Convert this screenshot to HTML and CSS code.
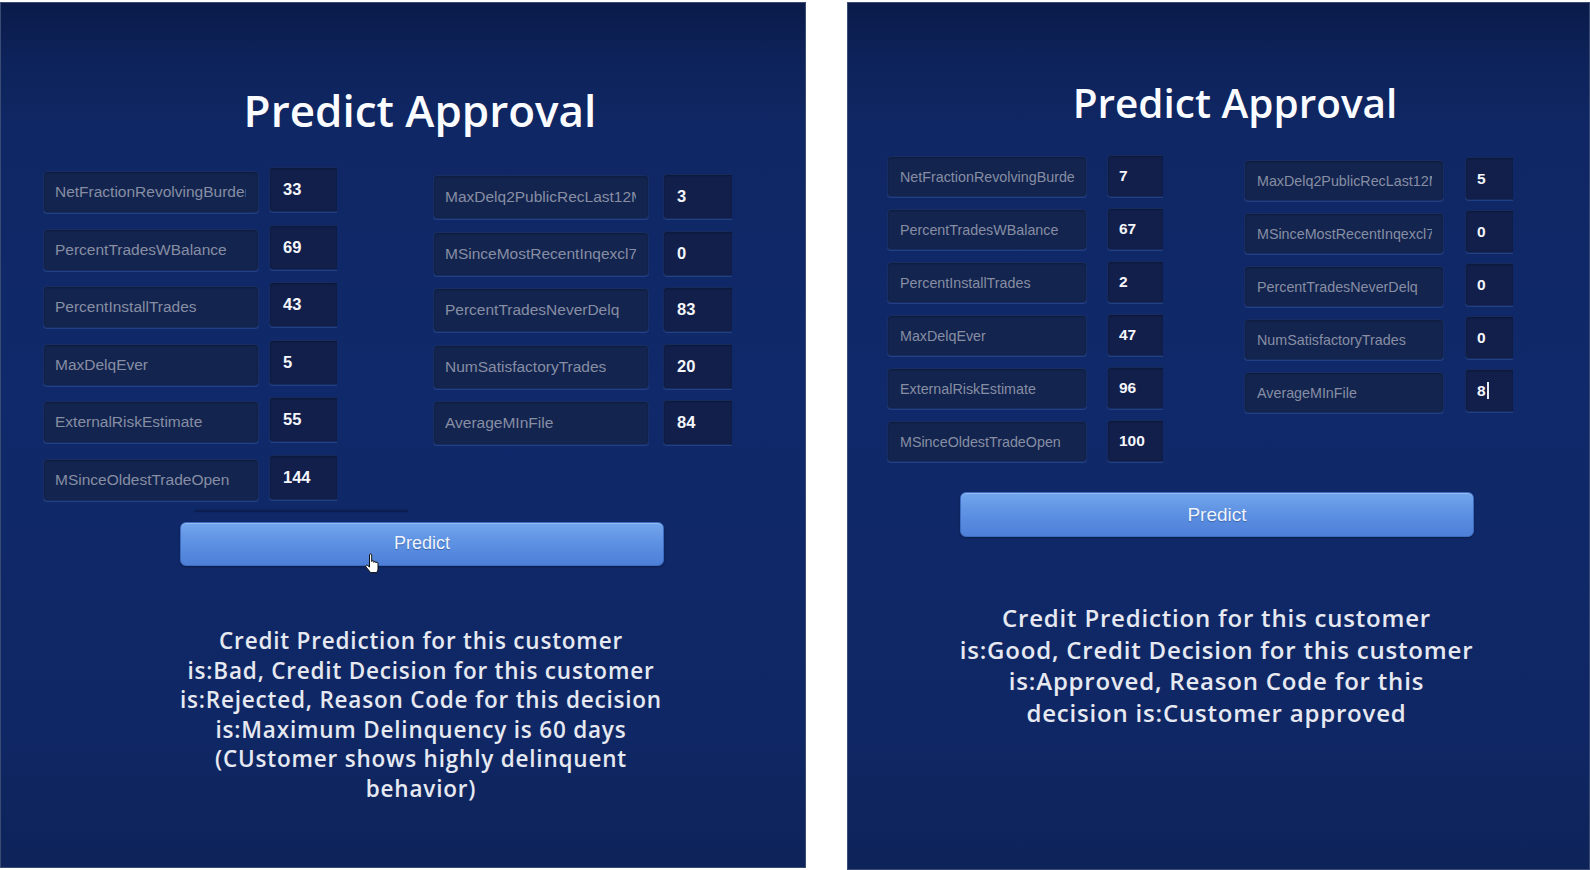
FILE: index.html
```html
<!DOCTYPE html>
<html lang="en">
<head>
<meta charset="utf-8">
<title>Predict Approval</title>
<link rel="stylesheet" href="styles.css">
</head>
<body>
<div class="page">
  <section class="panel panel-a">
    <h1 class="title">Predict Approval</h1>
    <div class="form">
      <div class="col col-left">
        <div class="row"><div class="field"><span>NetFractionRevolvingBurden</span></div><div class="val">33</div></div>
        <div class="row"><div class="field"><span>PercentTradesWBalance</span></div><div class="val">69</div></div>
        <div class="row"><div class="field"><span>PercentInstallTrades</span></div><div class="val">43</div></div>
        <div class="row"><div class="field"><span>MaxDelqEver</span></div><div class="val">5</div></div>
        <div class="row"><div class="field"><span>ExternalRiskEstimate</span></div><div class="val">55</div></div>
        <div class="row"><div class="field"><span>MSinceOldestTradeOpen</span></div><div class="val">144</div></div>
      </div>
      <div class="col col-right">
        <div class="row"><div class="field"><span>MaxDelq2PublicRecLast12M</span></div><div class="val">3</div></div>
        <div class="row"><div class="field"><span>MSinceMostRecentInqexcl7days</span></div><div class="val">0</div></div>
        <div class="row"><div class="field"><span>PercentTradesNeverDelq</span></div><div class="val">83</div></div>
        <div class="row"><div class="field"><span>NumSatisfactoryTrades</span></div><div class="val">20</div></div>
        <div class="row"><div class="field"><span>AverageMInFile</span></div><div class="val">84</div></div>
      </div>
    </div>
    <div class="shade-line"></div>
    <button class="btn" type="button">Predict</button>
    <p class="result">Credit Prediction for this customer<br>is:Bad, Credit Decision for this customer<br>is:Rejected, Reason Code for this decision<br>is:Maximum Delinquency is 60 days<br>(CUstomer shows highly delinquent<br>behavior)</p>
    <svg class="cursor" width="18" height="21" viewBox="0 0 18 21" aria-hidden="true">
      <path d="M5.5 2 C5.5 0.6 7.7 0.6 7.7 2 L7.7 8.6 C7.7 7.3 9.8 7.3 9.8 8.6 L9.8 9.4 C9.8 8.2 11.9 8.2 11.9 9.4 L11.9 10 C11.9 8.9 14 8.9 14 10 L14 15.2 C14 17.2 13.2 18.6 12.6 19.6 L6.6 19.6 L2 14 C1.2 13 2.4 11.6 3.5 12.4 L5.5 14 Z" fill="#ffffff" stroke="#111111" stroke-width="1"/>
    </svg>
  </section>

  <section class="panel panel-b">
    <h1 class="title">Predict Approval</h1>
    <div class="form">
      <div class="col col-left">
        <div class="row"><div class="field"><span>NetFractionRevolvingBurden</span></div><div class="val">7</div></div>
        <div class="row"><div class="field"><span>PercentTradesWBalance</span></div><div class="val">67</div></div>
        <div class="row"><div class="field"><span>PercentInstallTrades</span></div><div class="val">2</div></div>
        <div class="row"><div class="field"><span>MaxDelqEver</span></div><div class="val">47</div></div>
        <div class="row"><div class="field"><span>ExternalRiskEstimate</span></div><div class="val">96</div></div>
        <div class="row"><div class="field"><span>MSinceOldestTradeOpen</span></div><div class="val">100</div></div>
      </div>
      <div class="col col-right">
        <div class="row"><div class="field"><span>MaxDelq2PublicRecLast12M</span></div><div class="val">5</div></div>
        <div class="row"><div class="field"><span>MSinceMostRecentInqexcl7days</span></div><div class="val">0</div></div>
        <div class="row"><div class="field"><span>PercentTradesNeverDelq</span></div><div class="val">0</div></div>
        <div class="row"><div class="field"><span>NumSatisfactoryTrades</span></div><div class="val">0</div></div>
        <div class="row"><div class="field"><span>AverageMInFile</span></div><div class="val val-active">8<span class="caret"></span></div></div>
      </div>
    </div>
    <button class="btn" type="button">Predict</button>
    <p class="result">Credit Prediction for this customer<br>is:Good, Credit Decision for this customer<br>is:Approved, Reason Code for this<br>decision is:Customer approved</p>
  </section>
</div>
</body>
</html>
```

FILE: styles.css
```css
* { box-sizing: border-box; }

html, body {
  margin: 0;
  padding: 0;
  background: #ffffff;
}

.page {
  width: 1590px;
  height: 870px;
  display: flex;
  align-items: flex-start;
  gap: 41px;
  padding-top: 2px;
  overflow: hidden;
}

.panel {
  position: relative;
  flex: none;
  border: 1px solid #3a4b74;
  background: linear-gradient(to bottom, #0a1b49 0%, #0d2259 6%, #0f2764 14%, #10296a 45%, #0f2764 85%, #0d2359 100%);
  color: #ffffff;
}

.panel-a { width: 806px; height: 866px; padding-top: 78px; }
.panel-b { width: 743px; height: 868px; padding-top: 73px; }

.title {
  margin: 0;
  font-family: "Open Sans", "Noto Sans", sans-serif;
  font-weight: 600;
  text-align: center;
  color: #fbfcff;
}
.panel-a .title { font-size: 44px; line-height: 58px; padding-left: 34px; }
.panel-b .title { font-size: 40.5px; line-height: 53px; padding-left: 33px; }

.form {
  display: flex;
  align-items: flex-start;
}
.panel-a .form { margin-top: 28px; padding-left: 42px; gap: 96px; }
.panel-b .form { margin-top: 26px; padding-left: 39px; gap: 81px; }

.col {
  display: flex;
  flex-direction: column;
}
.panel-a .col { gap: 11.6px; }
.panel-a .col-right { margin-top: 7px; gap: 11.5px; }
.panel-b .col { gap: 11px; }
.panel-b .col-right { margin-top: 2px; gap: 9px; }

.row {
  display: flex;
  align-items: flex-start;
}
.panel-a .col-left .row { gap: 10px; }
.panel-a .col-right .row { gap: 14px; }
.panel-b .col-left .row { gap: 20px; }
.panel-b .col-right .row { gap: 21px; }

.field {
  display: flex;
  align-items: center;
  background: #13244f;
  border: 1px solid #182d61;
  border-radius: 4px;
  box-shadow: 0 1px 0 rgba(70, 110, 190, 0.35), inset 0 1px 2px rgba(0, 0, 0, 0.25);
  font-family: "Liberation Sans", Arial, sans-serif;
  color: #878ea3;
}
.field span {
  display: block;
  width: 100%;
  white-space: nowrap;
  overflow: hidden;
}

.val {
  display: flex;
  align-items: center;
  background: #111f4a;
  border: 1px solid #172a5c;
  border-right: none;
  border-radius: 4px 0 0 4px;
  box-shadow: 0 1px 0 rgba(70, 110, 190, 0.35), inset 0 1px 2px rgba(0, 0, 0, 0.25);
  font-family: "Liberation Sans", Arial, sans-serif;
  font-weight: 700;
  color: #f4f6fb;
}

.panel-a .field { width: 216px; height: 42px; margin-top: 4px; padding: 0 12px 0 11px; font-size: 15.5px; }
.panel-a .val { width: 68px; height: 45px; padding-left: 13px; font-size: 16.5px; }
.panel-a .col-right .field { height: 44px; margin-top: 1px; }
.panel-a .col-right .val { width: 69px; }

.panel-b .field { width: 200px; height: 41px; margin-top: 1px; padding: 0 11px 0 12px; font-size: 14.3px; }
.panel-b .val { width: 56px; height: 42px; padding-left: 11px; font-size: 15.5px; }
.panel-b .col-right .field { margin-top: 3px; }
.panel-b .col-right .val { width: 48px; height: 43px; }

.caret {
  display: inline-block;
  width: 2px;
  height: 17px;
  margin-left: 1px;
  background: #e8ecf6;
}

.shade-line {
  width: 213px;
  height: 2px;
  margin: 9px 0 0 194px;
  background: rgba(5, 12, 40, 0.35);
  box-shadow: 0 0 2px rgba(5, 12, 40, 0.3);
}

.btn {
  display: block;
  border: 1px solid #3d6cc0;
  border-radius: 6px;
  background: linear-gradient(to bottom, #72a6ec 0%, #5e92e3 45%, #4d7fd8 100%);
  box-shadow: inset 0 1px 0 rgba(255, 255, 255, 0.25), 0 1px 2px rgba(0, 0, 0, 0.3);
  font-family: "Liberation Sans", Arial, sans-serif;
  color: #eef3fc;
  text-shadow: 0 1px 1px rgba(20, 50, 110, 0.45);
  padding: 0;
  cursor: pointer;
}
.panel-a .btn { width: 484px; height: 44px; margin: 10px 0 0 179px; font-size: 18px; }
.panel-b .btn { width: 514px; height: 45px; margin: 30px 0 0 112px; font-size: 19px; }

.result {
  margin: 0;
  font-family: "Open Sans", "Noto Sans", sans-serif;
  font-weight: 600;
  text-align: center;
  color: #e6e9f1;
}
.panel-a .result { margin-top: 60px; padding-left: 36px; font-size: 22.5px; line-height: 29.6px; letter-spacing: 0.8px; }
.panel-b .result { margin-top: 65px; padding-right: 4px; font-size: 24px; line-height: 31.5px; letter-spacing: 0.8px; }

.cursor {
  position: absolute;
  left: 363px;
  top: 550px;
}
```
